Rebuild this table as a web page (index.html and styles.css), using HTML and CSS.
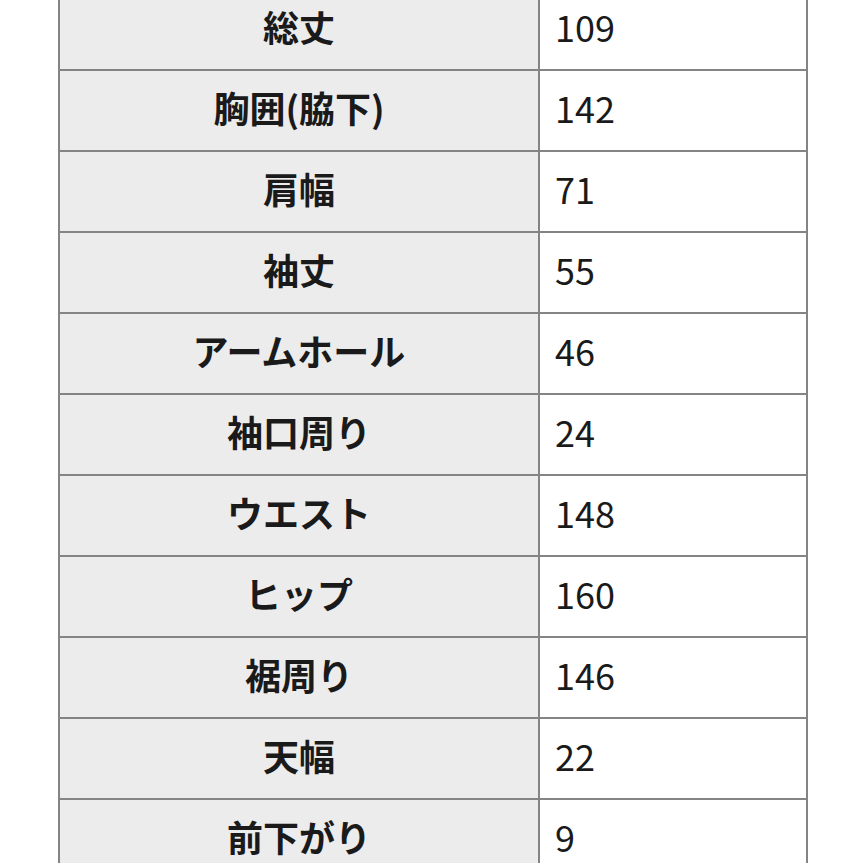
FILE: index.html
```html
<!DOCTYPE html>
<html lang="ja">
<head>
<meta charset="utf-8">
<link rel="stylesheet" href="styles.css">
</head>
<body>
<div class="page">
<table class="size">
<tr><th>総丈</th><td>109</td></tr>
<tr><th>胸囲(脇下)</th><td>142</td></tr>
<tr><th>肩幅</th><td>71</td></tr>
<tr><th>袖丈</th><td>55</td></tr>
<tr><th>アームホール</th><td>46</td></tr>
<tr><th>袖口周り</th><td>24</td></tr>
<tr><th>ウエスト</th><td>148</td></tr>
<tr><th>ヒップ</th><td>160</td></tr>
<tr><th>裾周り</th><td>146</td></tr>
<tr><th>天幅</th><td>22</td></tr>
<tr><th>前下がり</th><td>9</td></tr>
</table>
</div>
</body>
</html>
```
FILE: styles.css
```css
html, body {
  margin: 0;
  padding: 0;
  background: #ffffff;
  overflow: hidden;
}
.page {
  width: 863px;
  height: 863px;
  overflow: hidden;
}
.size {
  margin-top: -12px;
  margin-left: 58px;
  border-collapse: collapse;
  font-family: "Noto Sans CJK JP", "Noto Sans", sans-serif;
  font-size: 36px;
  color: #1a1a1a;
}
.size th, .size td {
  border: 2px solid #848484;
  height: 79px;
  padding: 0 0 8px 0;
  box-sizing: border-box;
  line-height: 1;
}
.size tr { height: 81px; }
.size th {
  width: 480px;
  background: #ececec;
  font-weight: 700;
  text-align: center;
}
.size td {
  width: 268px;
  background: #ffffff;
  font-weight: 400;
  text-align: left;
  padding-left: 15px;
}
```
